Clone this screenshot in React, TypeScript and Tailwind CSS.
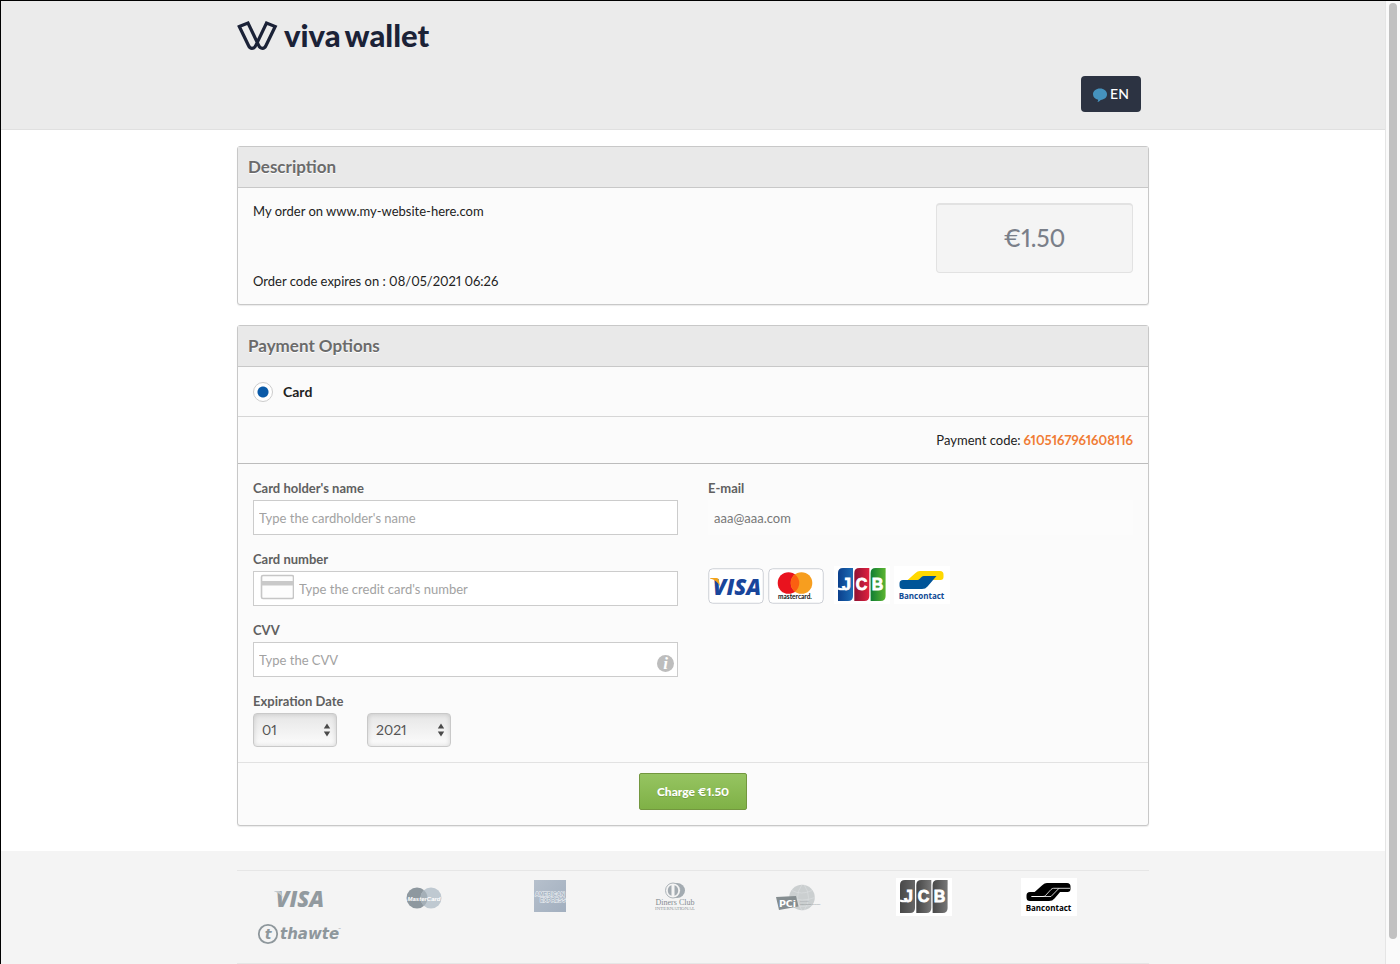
import { useState } from "react";
import type { ReactNode } from "react";
import { clsx } from "clsx";

interface PanelProps {
  title: string;
  children: ReactNode;
}

interface FieldProps {
  id: string;
  label: string;
  children: ReactNode;
}

interface PickerProps {
  label: string;
  options: string[];
}

const MONTHS = ["01", "02", "03", "04", "05", "06", "07", "08", "09", "10", "11", "12"];
const YEARS = ["2021", "2022", "2023", "2024", "2025", "2026", "2027", "2028", "2029", "2030"];

const inputStyle = "h-[35px] w-full border border-[#ccc] bg-white px-[5px] text-[13px] text-[#555] outline-none placeholder:text-[#a2a2a2]";

export default function App() {
  const [method, setMethod] = useState("card");

  return (
    <div className="flex min-h-screen border-t border-l border-black bg-white font-['Lato','Liberation_Sans',sans-serif] text-[#222] proportional-nums">
      <div className="flex min-w-0 flex-1 flex-col">
        <header className="border-b border-[#e0e0e0] bg-[#ebebeb]">
          <div className="mx-auto w-full max-w-[912px] pt-4 pb-[17px]">
            <Logo />
            <div className="mt-6 flex justify-end pr-2">
              <button type="button" className="flex h-9 w-[60px] items-center justify-center gap-[3px] rounded bg-[#2c3342] text-sm font-medium text-white">
                <svg viewBox="0 0 14 14" className="mt-[2px] size-[14px]" aria-hidden="true">
                  <path d="M7 0.5C3 0.5 0 3 0 6.300c0 2.700 2 4.700 5.200 5.400-.1.800-.3 1.500-.8 2.200 1.500-.4 2.500-1.100 3.200-2C11.300 11.700 14 9.500 14 6.300 14 3 11 .5 7 .5Z" fill="#4592bd" />
                </svg>
                EN
              </button>
            </div>
          </div>
        </header>

        <main className="mx-auto flex w-full max-w-[912px] flex-col gap-5 pt-4 pb-[25px]">
          <Panel title="Description">
            <div className="flex justify-between p-[15px]">
              <div className="flex flex-col justify-between text-[13px] leading-4">
                <p>My order on www.my-website-here.com</p>
                <p className="mt-[54px]">Order code expires on : 08/05/2021 06:26</p>
              </div>
              <div className="flex h-[70px] w-[197px] items-center justify-center rounded border border-t-2 border-[#e2e2e2] bg-[#f4f4f4] pb-[2px] text-2xl font-medium text-[#7a7f89]">€1.50</div>
            </div>
          </Panel>

          <Panel title="Payment Options">
            <form onSubmit={(event) => event.preventDefault()}>
              <label className="flex h-[50px] items-center gap-[10px] border-b border-[#d6d6d6] px-[15px] text-sm font-bold">
                <input
                  type="radio"
                  name="method"
                  value="card"
                  checked={method === "card"}
                  onChange={(event) => setMethod(event.target.value)}
                  className="size-5 appearance-none rounded-full border border-[#ccc] bg-white checked:bg-[radial-gradient(circle,#0a5aa8_5px,#fff_6px)]"
                />
                Card
              </label>

              <p className="flex h-[47px] items-center justify-end gap-[3px] border-b border-[#bcbcbc] px-[15px] pt-px text-[13px]">
                Payment code: <strong className="font-bold text-[#f07c35]">6105167961608116</strong>
              </p>

              <div className="grid grid-cols-2 gap-x-[30px] gap-y-4 px-[15px] pt-4 pb-[15px]">
                <Field id="holder" label="Card holder's name">
                  <input id="holder" placeholder="Type the cardholder's name" className={inputStyle} />
                </Field>
                <Field id="email" label="E-mail">
                  <input id="email" type="email" readOnly value="aaa@aaa.com" className="h-[35px] w-full bg-[#fcfcfc] px-[6px] text-[13px] text-[#777] outline-none" />
                </Field>

                <Field id="number" label="Card number">
                  <div className="relative">
                    <input id="number" inputMode="numeric" placeholder="Type the credit card's number" className={clsx(inputStyle, "pl-[45px]")} />
                    <svg viewBox="0 0 34 26" className="absolute top-[3px] left-[7px] h-[26px] w-[34px]" aria-hidden="true">
                      <rect x="1.500" y="1.500" width="32" height="23" rx="1.500" fill="#fdfdfd" stroke="#c6c6c6" strokeWidth="1.600" />
                      <path d="M1.500 7h32v4.500h-32z" fill="#c9c9c9" />
                    </svg>
                  </div>
                </Field>
                <div className="flex items-end gap-1 pb-[2px]">
                  <VisaCard />
                  <MastercardCard />
                  <div className="ml-[6px] flex gap-1">
                    <Jcb color />
                    <Bancontact color />
                  </div>
                </div>

                <Field id="cvv" label="CVV">
                  <div className="relative">
                    <input id="cvv" inputMode="numeric" placeholder="Type the CVV" className={inputStyle} />
                    <span className="absolute right-1 bottom-[5px] flex size-[17px] items-center justify-center rounded-full bg-[#bdbdbd] font-['Liberation_Serif',serif] text-[17px] leading-none font-bold text-white italic">i</span>
                  </div>
                </Field>

                <fieldset className="col-start-1">
                  <legend className="mb-1 text-[13px] leading-4 font-bold text-[#606060]">Expiration Date</legend>
                  <div className="flex gap-[30px]">
                    <Picker label="Expiration month" options={MONTHS} />
                    <Picker label="Expiration year" options={YEARS} />
                  </div>
                </fieldset>
              </div>

              <div className="flex justify-center border-t border-[#e2e2e2] pt-[10px] pb-[15px]">
                <button type="submit" className="h-[37px] w-[108px] rounded-[2px] border border-[#73973f] bg-linear-to-b from-[#96c461] to-[#7fb146] text-xs font-black text-white text-shadow-2xs">
                  Charge €1.50
                </button>
              </div>
            </form>
          </Panel>
        </main>

        <footer className="flex-1 bg-[#f4f4f4] pt-[19px]">
          <ul className="mx-auto grid w-full max-w-[912px] grid-cols-7 items-center justify-items-center border-y border-[#e6e6e6] pt-[7px] pr-[38px] pb-[18px]">
            <li><VisaGray /></li>
            <li><MastercardGray /></li>
            <li><Amex /></li>
            <li><Diners /></li>
            <li><Pci /></li>
            <li><Jcb /></li>
            <li><Bancontact /></li>
            <li className="mt-[7px]"><Thawte /></li>
          </ul>
        </footer>
      </div>

      <div className="w-[15px] shrink-0 border-l border-[#e5e5e5] bg-[#fafafa] pt-[2px] pb-[25px] pl-[3px]" aria-hidden="true">
        <div className="h-full w-2 rounded-full bg-[#c1c1c1]" />
      </div>
    </div>
  );
}

function Panel({ title, children }: PanelProps) {
  return (
    <section className="rounded-[3px] border border-[#c8c8c8] bg-[#fbfbfb] shadow-[0_1px_1px_rgba(0,0,0,0.08)]">
      <h2 className="flex h-[41px] items-center border-b border-[#c8c8c8] bg-[#e9e9e9] px-[10px] text-[17px] font-bold text-[#6b6b6b] text-shadow-[0_1px_0_#fff]">{title}</h2>
      {children}
    </section>
  );
}

function Field({ id, label, children }: FieldProps) {
  return (
    <div className="flex flex-col gap-1">
      <label htmlFor={id} className="text-[13px] leading-4 font-bold text-[#606060]">{label}</label>
      {children}
    </div>
  );
}

function Picker({ label, options }: PickerProps) {
  return (
    <div className="relative">
      <select aria-label={label} className="h-[34px] w-[84px] appearance-none rounded border border-[#c9c9c9] bg-linear-to-b from-[#e6e6e6] to-[#fcfcfc] pr-5 pl-2 text-sm text-[#555] shadow-[inset_0_0_5px_rgba(0,0,0,0.15)] outline-none">
        {options.map((option) => (
          <option key={option}>{option}</option>
        ))}
      </select>
      <svg viewBox="0 0 8 14" className="pointer-events-none absolute top-[10px] right-[6px] h-[14px] w-2" aria-hidden="true">
        <path d="M4 .5 7.200 5.500H.8zM4 13.500.8 8.500h6.400z" fill="#4a4a4a" />
      </svg>
    </div>
  );
}

function Logo() {
  return (
    <a href="#" className="flex h-[35px] w-fit items-center gap-[6px] text-[#1b2237]">
      <svg viewBox="0 0 41 32" className="mt-[2px] h-8 w-[41px]" aria-hidden="true">
        <path d="M2.300 6.500 11 3l10.500 22q1.200 3.300 4 3.300 2.200 0 3.500-2.800L38.200 6.500 29.500 3 19 25q-1.200 3.300-4 3.300-2.200 0-3.500-2.800z" fill="none" stroke="currentColor" strokeWidth="3.200" />
      </svg>
      <span className="text-[31px] leading-8 font-black">viva<span className="ml-1">wallet</span></span>
    </a>
  );
}

function VisaCard() {
  return (
    <svg viewBox="0 0 56 36" className="h-9 w-14" role="img" aria-label="Visa">
      <rect x=".75" y=".75" width="54.500" height="34.500" rx="4" fill="#fff" stroke="#cdd0d6" />
      <text x="29" y="26.500" textAnchor="middle" fontFamily="Open Sans" fontWeight="800" fontStyle="italic" fontSize="22" fill="#19459b">VISA</text>
      <path d="M2 10h6.500c1.500 0 2 .7 2.300 2l1.300 6.500C10 14 6.500 11.500 2 10.400z" fill="#f2a31b" />
    </svg>
  );
}

function MastercardCard() {
  return (
    <svg viewBox="0 0 56 36" className="h-9 w-14" role="img" aria-label="Mastercard">
      <rect x=".75" y=".75" width="54.500" height="34.500" rx="4" fill="#fff" stroke="#cdd0d6" />
      <circle cx="20.500" cy="15" r="10.800" fill="#e9131e" />
      <circle cx="33.500" cy="15" r="10.800" fill="#f79e1f" />
      <path d="M27 6.400a10.800 10.800 0 0 1 0 17.200 10.800 10.800 0 0 1 0-17.200z" fill="#fb5f11" />
      <text x="27" y="31" textAnchor="middle" fontFamily="Lato" fontWeight="bold" fontSize="6.500" fill="#111">mastercard.</text>
    </svg>
  );
}

function Jcb({ color = false }: { color?: boolean }) {
  const stripes = color
    ? [["#0b3f8c", "#1c6cb5"], ["#8f1233", "#e0213f"], ["#0f7d33", "#5cb531"]]
    : [["#484848", "#666"], ["#444", "#777"], ["#484848", "#777"]];
  const prefix = color ? "jcb-color" : "jcb-gray";

  return (
    <svg viewBox="0 0 56 38" className="h-[38px] w-14" role="img" aria-label="JCB">
      <rect width="56" height="38" fill="#fff" />
      {stripes.map(([from, to], index) => (
        <g key={from + index}>
          <linearGradient id={`${prefix}-${index}`}>
            <stop stopColor={from} />
            <stop offset="1" stopColor={to} />
          </linearGradient>
          <path d="M5 2h10v28q0 5-5 5H0V7q0-5 5-5z" transform={`translate(${4 + index * 16.300} 0)`} fill={`url(#${prefix}-${index})`} />
        </g>
      ))}
      <g textAnchor="middle" fontFamily="Liberation Sans" fontWeight="bold" fontSize="16" fill="#fff" stroke="#fff" strokeWidth=".8">
        <path d="M4 22.500q3 1.200 6 .7" fill="none" strokeWidth="2" />
        <text x="12.500" y="24">J</text>
        <text x="27.500" y="24">C</text>
        <text x="43.500" y="24">B</text>
      </g>
    </svg>
  );
}

function Bancontact({ color = false }: { color?: boolean }) {
  return (
    <svg viewBox="0 0 56 38" className="h-[38px] w-14" role="img" aria-label="Bancontact">
      <rect width="56" height="38" fill="#fff" />
      <path d="M12.500 15 21.500 7q2-2 4.500-2H46q3.500 0 3.500 3.500V11q0 3-3 3H36l-8 4H12.500z" fill={color ? "#ffd800" : "#000"} />
      <path d="M9 14h14.500q1 0 2-1l2-2q1-1 2.500-1h12.500l-9 10.500Q31.500 23 28 23H9q-3.500 0-3.500-3.500v-2Q5.500 14 9 14z" fill={color ? "#005498" : "#000"} />
      {!color && <path d="M10.500 18.500H22q1.500 0 2.500-1l5.500-6q1.200-1.200 2.500-1.200H49M10.500 18.500H30L38 10.300" fill="none" stroke="#fff" strokeWidth=".8" />}
      <text x="27.500" y="32.500" textAnchor="middle" fontFamily="Open Sans" fontWeight="bold" fontSize="8" fill={color ? "#0f4a94" : "#000"}>Bancontact</text>
    </svg>
  );
}

function VisaGray() {
  return (
    <svg viewBox="0 0 64 36" className="h-9 w-16" role="img" aria-label="Visa">
      <text x="33" y="28" textAnchor="middle" fontFamily="Open Sans" fontWeight="800" fontStyle="italic" fontSize="22" fill="#929a9f">VISA</text>
      <path d="M7 12h5q2 0 2.500 2l1.200 5Q13.500 14.500 7 12.300z" fill="#c3c9cd" />
    </svg>
  );
}

function MastercardGray() {
  return (
    <svg viewBox="0 0 36 22" className="mt-[2px] h-[22px] w-9" role="img" aria-label="MasterCard">
      <circle cx="11" cy="11" r="10.500" fill="#8e989f" />
      <circle cx="25" cy="11" r="10.500" fill="#bfc9d1" />
      <path d="M18 3.200a10.500 10.500 0 0 1 0 15.600 10.500 10.500 0 0 1 0-15.600z" fill="#a4afb7" />
      <text x="18" y="13.500" textAnchor="middle" fontFamily="Liberation Sans" fontWeight="bold" fontStyle="italic" fontSize="6" fill="#fff">MasterCard</text>
    </svg>
  );
}

function Amex() {
  return (
    <svg viewBox="0 0 34 34" className="h-[34px] w-[34px]" role="img" aria-label="American Express">
      <linearGradient id="amex" x2="1" y2="1">
        <stop stopColor="#b6c0cc" />
        <stop offset="1" stopColor="#a2afbf" />
      </linearGradient>
      <path d="M2 0h32v32H2z" fill="url(#amex)" />
      <g fontFamily="Liberation Sans" fontWeight="bold" fontSize="5.500" fill="#a2afbf" stroke="#f0f3f6" strokeWidth="1" paintOrder="stroke">
        <text x="3" y="16">AMERICAN</text>
        <text x="8" y="22">EXPRESS</text>
      </g>
    </svg>
  );
}

function Diners() {
  return (
    <svg viewBox="0 0 42 34" className="h-[34px] w-[42px]" role="img" aria-label="Diners Club International">
      <ellipse cx="24" cy="10.500" rx="8" ry="7.500" fill="#a3abb1" />
      <circle cx="20" cy="10.500" r="7.500" fill="#f4f4f4" stroke="#9aa3a9" strokeWidth=".8" />
      <path d="M18.500 5.300a5.500 5.500 0 0 0 0 10.400zM21.500 5.300a5.500 5.500 0 0 1 0 10.400z" fill="#a3abb1" />
      <text x="22" y="25" textAnchor="middle" fontFamily="Liberation Serif" fontSize="8" fill="#858c91">Diners Club</text>
      <text x="22" y="30" textAnchor="middle" fontFamily="Liberation Serif" fontSize="5" fill="#8e9599">INTERNATIONAL</text>
    </svg>
  );
}

function Pci() {
  return (
    <svg viewBox="0 0 50 28" className="h-7 w-[50px]" role="img" aria-label="PCI Security Standards Council">
      <circle cx="28" cy="14.500" r="12.800" fill="#cbcfd0" />
      <path d="M18 7.500q9 5 20 0M16 14.500q12 5 25 0M19 21.500q9 4 20 0M28 1.500q-9 13 0 26M30 1.500q9 13 0 26" fill="none" stroke="#dcdfe0" strokeWidth=".6" />
      <path d="M2 14l20-1 2.500 10.500L5 27z" fill="#858d90" />
      <text x="13.500" y="24" textAnchor="middle" fontFamily="DejaVu Sans" fontWeight="bold" fontSize="9.500" fill="#fff">PCi</text>
      <text x="26" y="19" fontFamily="Liberation Sans" fontSize="2.500" fill="#a2a7aa">Security</text>
      <text x="26" y="22" fontFamily="Liberation Sans" fontSize="2.500" fill="#8c9295">Standards Council</text>
    </svg>
  );
}

function Thawte() {
  return (
    <svg viewBox="0 0 86 22" className="h-[22px] w-[86px]" role="img" aria-label="thawte">
      <circle cx="12" cy="11" r="9.200" fill="none" stroke="#8e979c" strokeWidth="1.800" />
      <text x="12" y="16" textAnchor="middle" fontFamily="DejaVu Sans" fontStyle="italic" fontWeight="bold" fontSize="14" fill="#8e979c">t</text>
      <text x="24" y="16" fontFamily="DejaVu Sans" fontWeight="bold" fontStyle="italic" fontSize="15" fill="#8e979c">thawte</text>
      <text x="82" y="7" fontFamily="Liberation Sans" fontSize="3" fill="#8e979c">™</text>
    </svg>
  );
}
